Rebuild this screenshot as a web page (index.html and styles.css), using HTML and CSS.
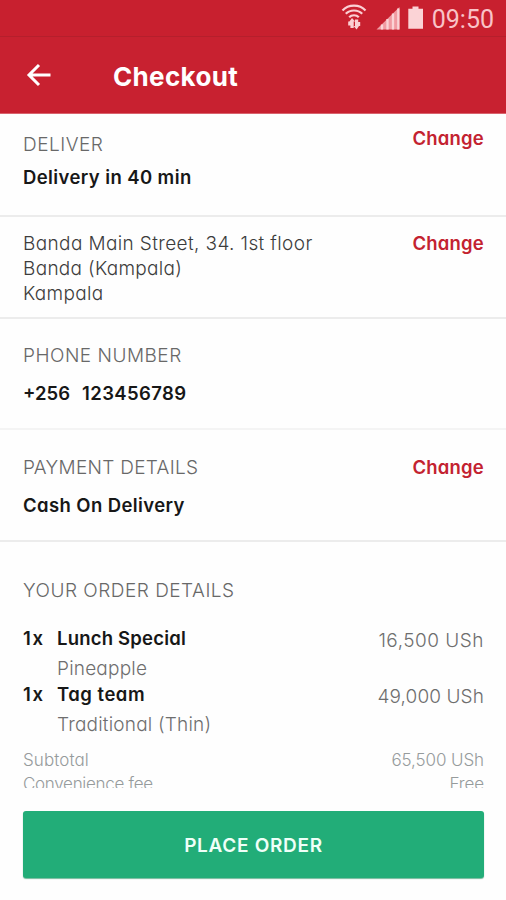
FILE: index.html
```html
<!DOCTYPE html>
<html lang="en">
<head>
<meta charset="utf-8">
<title>Checkout</title>
<link rel="stylesheet" href="styles.css">
</head>
<body>
<div class="screen">
  <div class="status">
    <svg class="status-icons" width="100" height="37" viewBox="0 0 100 37">
      <g fill="none" stroke="#fbd0d4" stroke-width="2.2">
        <path d="M6.500 10.400C12.500 4 23.500 4 29.500 10.400"/>
        <path d="M9.800 13.800C14 9.400 22 9.400 26.200 13.800"/>
        <path d="M13.200 17.200C15.600 14.600 20.400 14.600 22.800 17.200"/>
      </g>
      <path fill="#fbd0d4" d="M16 18l3.200 3.600h-1.500v6.400h-3.300v-2.400h-2.200v-4h1.200zM20.600 29.600l-3-3.600h1.400v-6.400h3.200v2.400h2v4h-1.200z"/>
      <path fill="#f09aa2" d="M40.500 29.500L63.500 7V29.500z"/>
      <path stroke="#fbd3d6" stroke-width="2.300" d="M46 24.500v5M51.500 19v10.500M57 13.500v16M62.300 8.500v21"/>
      <path fill="#fbd3d6" d="M76.500 6.500h6v2.200h4.500v20H72.300v-20h4.200z"/>
    </svg>
    <span class="time">09:50</span>
  </div>
  <header class="appbar">
    <svg class="back" width="26" height="26" viewBox="0 0 26 26" fill="none" stroke="#fff" stroke-width="3"><path d="M24.500 13H3M13 3L3 13L13 23"/></svg>
    <h1 class="title">Checkout</h1>
  </header>
  <main class="content">
    <section class="block deliver">
      <div>
        <div class="label">DELIVER</div>
        <div class="value">Delivery in 40 min</div>
      </div>
      <a class="change">Change</a>
    </section>
    <section class="block address">
      <div class="lines">
        <div class="street">Banda Main Street, 34. 1st floor</div>
        <div>Banda (Kampala)</div>
        <div>Kampala</div>
      </div>
      <a class="change">Change</a>
    </section>
    <section class="block phone">
      <div>
        <div class="label">PHONE NUMBER</div>
        <div class="value number"><span class="code">+256</span><span>123456789</span></div>
      </div>
    </section>
    <section class="block payment">
      <div>
        <div class="label payment-label">PAYMENT DETAILS</div>
        <div class="value">Cash On Delivery</div>
      </div>
      <a class="change">Change</a>
    </section>
    <section class="order">
      <div class="label order-label">YOUR ORDER DETAILS</div>
      <div class="item">
        <span class="qty">1x</span>
        <div class="desc"><div class="name">Lunch Special</div><div class="extra">Pineapple</div></div>
        <span class="price wide">16,500 USh</span>
      </div>
      <div class="item">
        <span class="qty">1x</span>
        <div class="desc"><div class="name team">Tag team</div><div class="extra">Traditional (Thin)</div></div>
        <span class="price">49,000 USh</span>
      </div>
      <div class="totals">
        <div class="total"><span>Subtotal</span><span class="amount">65,500 USh</span></div>
        <div class="total"><span class="fee">Convenience fee</span><span class="amount">Free</span></div>
      </div>
    </section>
  </main>
  <button class="place">PLACE ORDER</button>
</div>
</body>
</html>
```
FILE: styles.css
```css
* { box-sizing: border-box; }
body { margin: 0; background: #fff; }
.screen {
  width: 506px; height: 900px; overflow: hidden;
  display: flex; flex-direction: column;
  font-family: Inter, "Liberation Sans", sans-serif;
  font-feature-settings: "cv11";
  font-size: 19px; line-height: 24px; color: #3c3c3c; background: #fefefe;
}
.status {
  height: 37px; flex: none; display: flex; justify-content: flex-end;
  padding-right: 12px; background: #c8202f; border-bottom: 1px solid #b51f2c;
}
.status-icons { flex: none; margin-right: -4px; }
.time { font-family: Roboto, sans-serif; font-size: 25px; line-height: 40px; color: #f9c3c8; }
.appbar {
  height: 77px; flex: none; display: flex; align-items: center;
  padding-left: 26px; background: #c82130; border-bottom: 1px solid #d9636d;
}
.back { margin-right: 61px; }
.title { margin: 3px 0 0; font-size: 26px; line-height: 32px; font-weight: 700; letter-spacing: 0.35px; color: #fff; }
.content { height: 674px; flex: none; overflow: hidden; }
.block {
  display: flex; justify-content: space-between; align-items: flex-start;
  padding: 0 22px 0 23px; border-bottom: 2px solid #ececec;
}
.label { font-weight: 300; color: #686868; letter-spacing: 0.5px; }
.value, .name, .qty { font-size: 18.5px; font-weight: 600; color: #171717; letter-spacing: 0.4px; }
.change { font-size: 18.5px; font-weight: 600; letter-spacing: 0.2px; color: #c32230; }
.deliver { height: 103px; padding-top: 19px; }
.deliver .value { margin-top: 8px; }
.deliver .change { margin-top: -7px; }
.address { height: 102px; padding-top: 14px; }
.lines { font-weight: 300; line-height: 25px; letter-spacing: 0.3px; }
.street { letter-spacing: 0.38px; }
.phone { height: 111px; padding-top: 25px; border-bottom-color: #f4f4f4; }
.phone .value, .payment .value { margin-top: 13px; }
.number { display: flex; gap: 12px; }
.code { letter-spacing: 0; }
.payment { height: 112px; padding-top: 26px; }
.payment-label { letter-spacing: 0.3px; }
.payment .change { margin-top: -1px; }
.order { padding: 37px 22px 0 23px; }
.order-label { letter-spacing: 0.5px; margin-bottom: 23px; }
.item { display: flex; height: 55.500px; }
.qty { width: 34px; flex: none; letter-spacing: 1.8px; }
.desc { flex: 1; }
.name { letter-spacing: 0.2px; }
.team { letter-spacing: 0.5px; }
.extra { font-weight: 300; color: #6e6e6e; margin-top: 7px; letter-spacing: 0.2px; }
.price { font-weight: 300; color: #6e6e6e; margin-top: 3px; letter-spacing: 0.1px; }
.wide { letter-spacing: 0.5px; }
.totals { padding-top: 11px; font-size: 17px; font-weight: 300; color: #969b9c; letter-spacing: 0.1px; }
.amount { letter-spacing: -0.1px; }
.fee { letter-spacing: -0.3px; }
.total { display: flex; justify-content: space-between; height: 24px; }
.place {
  width: 461px; height: 67px; margin: 23px 0 0 23px; flex: none; padding: 2px 0 0;
  border: 0; border-radius: 3px; background: #22ad78; color: #effff8;
  box-shadow: 0 1px 1px #72b99b;
  font: 600 19px/24px Inter, "Liberation Sans", sans-serif; letter-spacing: 0.7px;
}
```
